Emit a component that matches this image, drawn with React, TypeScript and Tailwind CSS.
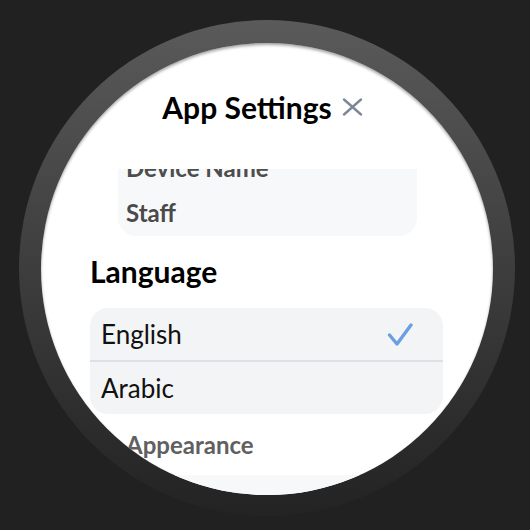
export default function App() {
  return (
    <div className="w-[530px] h-[530px] bg-[#212121] pl-[19px] pt-[20px] font-['Lato',sans-serif]">
      {/* watch bezel */}
      <div className="w-[496px] h-[496px] rounded-full bg-linear-to-b from-[#5a5a5a] to-[#232323] pl-[22px] pt-[23px]">
        {/* screen */}
        <div className="w-[452px] h-[452px] rounded-full bg-white overflow-hidden flex flex-col shadow-[inset_0_2px_3px_rgba(0,0,0,0.35)]">
          <div className="h-[126px] shrink-0 flex items-center justify-center pr-[9px] pt-[2px]">
            <span className="text-[30px] leading-[36px] font-bold text-black">App Settings</span>
            <svg width="21" height="18" viewBox="0 0 21 18" className="ml-[10px]" fill="none" stroke="#7d8896" strokeWidth="2.4" strokeLinecap="round">
              <path d="M2 1.5 L19 16.5 M19 1.5 L2 16.5" />
            </svg>
          </div>

          <div className="flex-1 overflow-hidden flex flex-col">
            {/* General (scrolled up, scaled) */}
            <div className="-mt-[25px] w-[299px] ml-[77px] rounded-[18px] bg-[#f7f8fa] pt-[10px] pb-[9px] pl-[8px] flex flex-col gap-[17px]">
              <div className="text-[24px] leading-[28px] font-bold text-[#4d4d4d]">Device Name</div>
              <div className="text-[24px] leading-[28px] font-bold text-[#4a4a4a]">Staff</div>
            </div>

            <div className="mt-[17px] ml-[49px] text-[30px] leading-[36px] font-bold text-black">Language</div>

            <div className="mt-[19px] ml-[49px] w-[353px] rounded-[18px] bg-[#f3f4f6] flex flex-col">
              <div className="h-[52px] flex items-center justify-between pl-[11px] pr-[30px]">
                <span className="text-[26px] leading-[52px] text-[#111]">English</span>
                <svg width="26" height="23" viewBox="0 0 26 23" fill="none" stroke="#6a9fe0" strokeWidth="3.4" strokeLinecap="round" strokeLinejoin="round">
                  <path d="M2.5 12 L10 21 L24 2" />
                </svg>
              </div>
              <div className="h-[2px] bg-[#dfe0e3]" />
              <div className="h-[52px] flex items-center pl-[11px]">
                <span className="text-[26px] leading-[52px] text-[#111]">Arabic</span>
              </div>
            </div>

            <div className="mt-[17px] ml-[85px] text-[24px] leading-[28px] font-bold text-[#606060]">Appearance</div>
            <div className="mt-[16px] ml-[77px] w-[299px] h-[60px] shrink-0 rounded-[18px] bg-[#f7f8fa]" />
          </div>
        </div>
      </div>
    </div>
  );
}
